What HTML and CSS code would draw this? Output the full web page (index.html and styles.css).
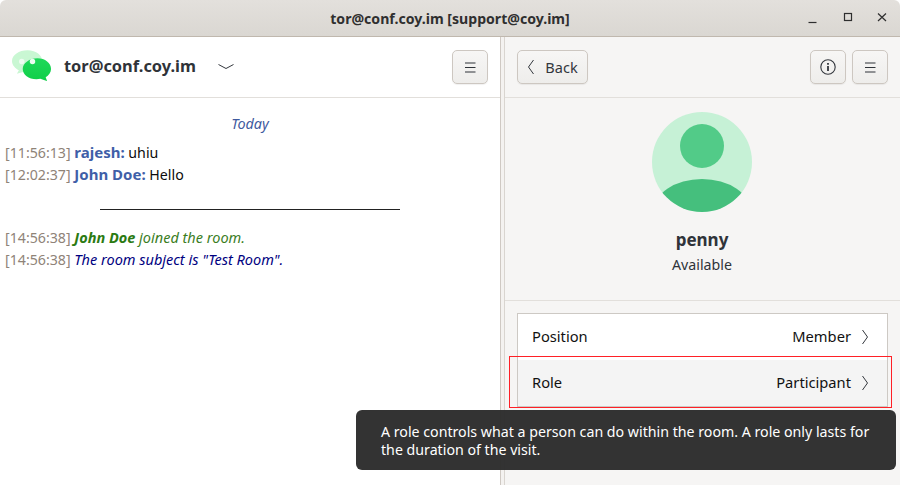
FILE: index.html
```html
<!DOCTYPE html>
<html lang="en">
<head>
<meta charset="utf-8">
<title>tor@conf.coy.im [support@coy.im]</title>
<link rel="stylesheet" href="styles.css">
</head>
<body>
<div class="window">
  <header class="titlebar">
    <div class="title">tor@conf.coy.im [support@coy.im]</div>
    <div class="wm-buttons">
      <svg class="wm-icon" viewBox="0 0 16 16"><path d="M2.500 12.500h8" /></svg>
      <svg class="wm-icon" viewBox="0 0 16 16"><rect x="4.500" y="3.500" width="7" height="7" /></svg>
      <svg class="wm-icon" viewBox="0 0 16 16"><path d="M4 3.500l8 7.500M12 3.500l-8 7.500" /></svg>
    </div>
  </header>
  <div class="panes">
    <section class="left">
      <div class="left-head">
        <svg class="logo" viewBox="0 0 42 32">
          <defs><linearGradient id="bubble" x1="0" y1="0" x2="0" y2="1"><stop offset="0" stop-color="#1fd85a"/><stop offset="1" stop-color="#0fcf48"/></linearGradient></defs>
          <path d="M16 1C7 1 0 6 0 12c0 4 3 7.500 7 9.500L5 25l9-2.500h2c9 0 15-5 15-10.500S25 1 16 1z" fill="#c9f7d3"/>
          <path d="M26 9c-8 0-15 5-15 11 0 6 6 10.500 14 10.500 1.500 0 3-.2 4-.4l7 2.400-1.500-4c3-2 5.500-5 5.500-8.500C40 14 34 9 26 9z" fill="url(#bubble)"/>
          <circle cx="10" cy="12.500" r="2.800" fill="#eefcf1"/>
          <circle cx="21" cy="12.500" r="2.800" fill="#eefcf1"/>
        </svg>
        <span class="account">tor@conf.coy.im</span>
        <svg class="chevron-down" viewBox="0 0 16 8"><path d="M.5 1.500 8 5.500l7.500-4" /></svg>
        <button class="btn btn-icon menu-left" type="button" aria-label="Menu">
          <svg class="hamburger" viewBox="0 0 12 11"><path d="M1 1h10.500M1 5.500h10.500M1 10h10.500" /></svg>
        </button>
      </div>
      <div class="chat">
        <div class="today">Today</div>
        <p class="line first"><span class="ts">[11:56:13]</span> <b class="nick">rajesh:</b> uhiu</p>
        <p class="line"><span class="ts">[12:02:37]</span> <b class="nick">John Doe:</b> Hello</p>
        <div class="rule"></div>
        <p class="line"><span class="ts">[14:56:38]</span> <i class="joined"><b>John Doe</b> joined the room.</i></p>
        <p class="line"><span class="ts">[14:56:38]</span> <i class="subject">The room subject is "Test Room".</i></p>
      </div>
    </section>
    <div class="handle"></div>
    <section class="right">
      <div class="right-head">
        <button class="btn btn-back" type="button">
          <svg class="chev-left" viewBox="0 0 8 16"><path d="M6.500 1 1.500 8l5 7" /></svg>
          <span>Back</span>
        </button>
        <div class="head-actions">
          <button class="btn btn-icon" type="button" aria-label="Information">
            <svg class="info" viewBox="0 0 16 16">
              <circle cx="8" cy="8" r="7.200"/>
              <path class="info-i" d="M8 7v5M8 4v1.700"/>
            </svg>
          </button>
          <button class="btn btn-icon" type="button" aria-label="Menu">
            <svg class="hamburger" viewBox="0 0 12 11"><path d="M1 1h10.500M1 5.500h10.500M1 10h10.500" /></svg>
          </button>
        </div>
      </div>
      <div class="profile">
        <svg class="avatar" viewBox="0 0 100 100">
          <defs><clipPath id="disc"><circle cx="50" cy="50" r="50"/></clipPath></defs>
          <circle cx="50" cy="50" r="50" fill="#c6f1d6"/>
          <circle cx="50" cy="34" r="22" fill="#52cb88"/>
          <ellipse cx="50" cy="100" rx="49" ry="33" fill="#45bf7d" clip-path="url(#disc)"/>
        </svg>
        <div class="name">penny</div>
        <div class="status">Available</div>
      </div>
      <div class="details">
        <div class="list">
          <div class="row"><span class="row-label">Position</span><span class="row-value">Member</span><svg class="chev-right" viewBox="0 0 8 16"><path d="M1.500 1l5 7-5 7" /></svg></div>
          <div class="row row-hover"><span class="row-label">Role</span><span class="row-value">Participant</span><svg class="chev-right" viewBox="0 0 8 16"><path d="M1.500 1l5 7-5 7" /></svg></div>
        </div>
      </div>
    </section>
  </div>
  <div class="highlight"></div>
  <div class="tooltip">A role controls what a person can do within the room. A role only lasts for the duration of the visit.</div>
</div>
</body>
</html>
```
FILE: styles.css
```css
* { box-sizing: border-box; }
html, body { margin: 0; padding: 0; height: 100%; }
body { font-family: "Noto Sans", "Open Sans", sans-serif; font-size: 14px; color: #1a1d20; background: #fff; overflow: hidden; }
svg { display: block; fill: none; }

.window { position: relative; width: 900px; height: 485px; display: flex; flex-direction: column; background: #fff; }

.titlebar { height: 37px; flex: none; display: flex; align-items: center; justify-content: center; position: relative; background: linear-gradient(#e3e0dc, #dad7d2); border-bottom: 1px solid #c0b8ae; border-radius: 6px 6px 0 0; }
.title { font-weight: 700; font-size: 14.100px; color: #2f2f2f; }
.wm-buttons { position: absolute; right: 10px; top: 10px; display: flex; gap: 18px; }
.wm-icon { width: 16px; height: 16px; stroke: #2e2e2e; stroke-width: 1.200; }

.panes { flex: 1; display: flex; min-height: 0; }

.left { width: 500px; flex: none; background: #fff; }
.left-head { height: 61px; display: flex; align-items: center; padding: 0 12px 0 12px; border-bottom: 1px solid #e2dfdb; }
.logo { width: 41px; height: 32px; margin-top: -4px; }
.account { margin: -3px 0 0 11px; font-size: 16.400px; font-weight: 700; color: #2f3339; }
.chevron-down { width: 16px; height: 8px; margin-left: 22px; stroke: #33373d; stroke-width: 1; }
.menu-left { margin-left: auto; }

.btn { height: 34px; display: flex; align-items: center; justify-content: center; padding: 0; font: inherit; color: #33373d; background: linear-gradient(#f7f6f5, #eeedeb); border: 1px solid #cdc7c1; border-radius: 5px; box-shadow: 0 1px 1px rgba(0, 0, 0, .06); }
.btn-icon { width: 36px; }
.btn-back { width: 71px; gap: 10px; font-size: 14.500px; }
.hamburger { width: 12px; height: 11px; stroke: #2e3338; stroke-width: 1; }
.chev-left { width: 8px; height: 16px; stroke: #33373d; stroke-width: 1; }
.info { width: 16px; height: 16px; stroke: #33373d; stroke-width: 1.100; }
.info .info-i { stroke-width: 1.800; }

.chat { padding: 16px 5px 0; }
.today { text-align: center; font-style: italic; font-size: 14.400px; line-height: 20px; color: #3f5a9e; }
.line { height: 22px; margin: 0; font-size: 14.200px; line-height: 22px; color: #0c0c0c; white-space: nowrap; }
.line.first { margin-top: 7px; }
.ts { color: #8f8378; }
.nick { color: #3f5fa8; font-size: 15px; }
.joined { color: #3a7d1e; font-size: 14.500px; }
.joined b { color: #2b7a12; }
.subject { color: #00007f; font-size: 14.500px; }
.rule { width: 300px; height: 1px; margin: 24px 0 16px 95px; background: #222; }

.handle { width: 5px; flex: none; background: #f4f2f0; border-left: 1px solid #cfc9c3; border-right: 1px solid #d9d5d0; }

.right { flex: 1; min-width: 0; background: #f6f5f4; display: flex; flex-direction: column; }
.right-head { height: 61px; flex: none; display: flex; align-items: center; justify-content: space-between; padding: 0 12px; border-bottom: 1px solid #e2dfdb; }
.head-actions { display: flex; gap: 6px; }

.profile { height: 203px; flex: none; display: flex; flex-direction: column; align-items: center; padding: 14px 1px 0 0; border-bottom: 1px solid #e2dfdb; }
.avatar { width: 100px; height: 100px; }
.name { margin-top: 16px; font-size: 17px; line-height: 24px; font-weight: 700; color: #2f3339; }
.status { margin-top: 3px; font-size: 14.200px; line-height: 20px; color: #2f3339; }

.details { padding: 12px; }
.list { background: #fff; border: 1px solid #cdc9c4; }
.row { height: 46px; display: flex; align-items: center; padding: 0 18px 0 14px; color: #111; font-size: 14.700px; }
.row-label, .row-value { margin-top: -2px; }
.row-hover { height: 46px; background: #f4f4f4; }
.row-label { flex: 1; }
.row-value { margin-right: 10px; }
.chev-right { width: 8px; height: 16px; stroke: #33373d; stroke-width: 1; }

.highlight { position: absolute; left: 509px; top: 356px; width: 383px; height: 52px; border: 1px solid #ff2026; }
.tooltip { position: absolute; left: 356px; top: 410px; width: 540px; height: 60px; padding: 13px 20px 0 25px; font-size: 14.200px; line-height: 18px; color: #fff; background: rgba(44, 44, 44, .97); border-radius: 6px; }
```
